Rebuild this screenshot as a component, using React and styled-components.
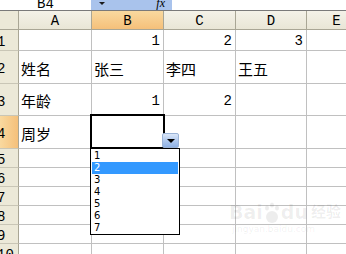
import React from 'react';
import styled, { createGlobalStyle } from 'styled-components';

const GlobalStyle = createGlobalStyle`
  html, body {
    margin: 0;
    padding: 0;
    background: #ffffff;
    overflow: hidden;
  }
`;

const Sheet = styled.div`
  position: relative;
  width: 346px;
  height: 254px;
  overflow: hidden;
  background: #ffffff;
  font-family: "Liberation Mono", "Noto Sans CJK SC", monospace;
  color: #000;
`;

const TopBar = styled.div`
  display: flex;
  height: 10px;
  border-bottom: 1px solid #7a7a7a;
`;

const NameBox = styled.div`
  width: 91px;
  display: flex;
  justify-content: center;
  align-items: flex-end;
  overflow: hidden;
  font-size: 14px;
  line-height: 14px;
  span {
    margin-bottom: -1px;
  }
`;

const FormulaButtons = styled.div`
  width: 81px;
  background: #a9c3ec;
  display: flex;
  align-items: center;
  justify-content: space-between;
  padding: 0 7px 0 8px;
  box-sizing: border-box;
  overflow: hidden;
`;

const TinyArrow = styled.span`
  width: 0;
  height: 0;
  border-left: 3px solid transparent;
  border-right: 3px solid transparent;
  border-top: 3px solid #1a1a1a;
  margin-top: -3px;
`;

const Fx = styled.span`
  font-family: "Liberation Serif", serif;
  font-style: italic;
  font-size: 12px;
  line-height: 10px;
  margin-top: -4px;
`;

const Grid = styled.div`
  display: grid;
  grid-template-columns: 19px 73px 72px 72px 71px 60px;
  grid-template-rows: 19px 21px 33px 32px 33px repeat(6, 19px);
`;

const Cell = styled.div`
  box-sizing: border-box;
  border-right: 1px solid #c0c0c0;
  border-bottom: 1px solid #c0c0c0;
  display: flex;
  align-items: center;
  justify-content: ${p => (p.$num ? 'flex-end' : 'flex-start')};
  padding: ${p => (p.$num ? '2px 3px 0 0' : '2px 0 0 2px')};
  font-size: ${p => (p.$num ? '14px' : '15px')};
  font-family: ${p => (p.$num
    ? '"Liberation Mono", monospace'
    : '"Noto Sans CJK SC", sans-serif')};
  white-space: nowrap;
  overflow: hidden;
`;

const ColHead = styled.div`
  box-sizing: border-box;
  border-right: 1px solid #a9a695;
  border-bottom: 1px solid #a9a695;
  background: ${p => (p.$active
    ? 'linear-gradient(#f9d99f, #f5c07a)'
    : 'linear-gradient(#f4f2e8, #e9e6d6)')};
  display: flex;
  align-items: center;
  justify-content: center;
  font-family: "Liberation Mono", monospace;
  font-size: 14px;
  padding-top: 1px;
`;

const RowHead = styled.div`
  box-sizing: border-box;
  border-right: 1px solid #a9a695;
  border-bottom: 1px solid #c9c6b6;
  background: ${p => (p.$active
    ? 'linear-gradient(90deg, #f9d99f, #f5c07a)'
    : '#ece9d8')};
  display: flex;
  align-items: center;
  font-family: "Liberation Mono", monospace;
  font-size: 14px;
  padding-top: 4px;
  overflow: hidden;
  span {
    margin-left: -3px;
  }
`;

const Corner = styled(ColHead)`
  background: #ece9d8;
`;

const SelectedCell = styled.div`
  position: absolute;
  left: 90px;
  top: 114px;
  width: 75px;
  height: 35px;
  box-sizing: border-box;
  border: 2px solid #000;
`;

const DropButton = styled.div`
  position: absolute;
  left: 162px;
  top: 133px;
  width: 17px;
  height: 15px;
  box-sizing: border-box;
  border: 1px solid #9bb3d6;
  border-radius: 2px;
  background: linear-gradient(#dbe7f8, #a9c4ec 60%, #8fb1e4);
  display: flex;
  align-items: center;
  justify-content: center;
  &::after {
    content: '';
    width: 0;
    height: 0;
    border-left: 4px solid transparent;
    border-right: 4px solid transparent;
    border-top: 4px solid #000;
    margin-top: 1px;
  }
`;

const ListBox = styled.div`
  position: absolute;
  left: 90px;
  top: 148px;
  width: 90px;
  box-sizing: border-box;
  border: 1px solid #000;
  background: #fff;
  padding: 1px 1px 0;
`;

const ListItem = styled.div`
  height: 12px;
  line-height: 12px;
  font-family: "DejaVu Sans", sans-serif;
  font-size: 10px;
  padding-left: 2px;
  background: ${p => (p.$selected ? '#3399ff' : 'transparent')};
  color: ${p => (p.$selected ? '#ffffff' : '#000000')};
`;

const Watermark = styled.div`
  position: absolute;
  left: 229px;
  top: 200px;
  color: rgba(0, 0, 0, 0.07);
  font-family: "DejaVu Sans", "Noto Sans CJK SC", sans-serif;
  pointer-events: none;
`;

const MarkTitle = styled.div`
  display: flex;
  align-items: flex-end;
  font-size: 19px;
  font-weight: bold;
  line-height: 24px;
  gap: 1px;
`;

const MarkUrl = styled.div`
  font-size: 9px;
  line-height: 11px;
  padding-left: 3px;
`;

const columns = ['A', 'B', 'C', 'D', 'E'];

const rows = [
  ['', '1', '2', '3', ''],
  ['姓名', '张三', '李四', '王五', ''],
  ['年龄', '1', '2', '', ''],
  ['周岁', '', '', '', ''],
  ['', '', '', '', ''],
  ['', '', '', '', ''],
  ['', '', '', '', ''],
  ['', '', '', '', ''],
  ['', '', '', '', ''],
  ['', '', '', '', ''],
];

const options = ['1', '2', '3', '4', '5', '6', '7'];

const isNum = v => /^\d+$/.test(v);

export default function App() {
  return (
    <>
      <GlobalStyle />
      <Sheet>
        <TopBar>
          <NameBox><span>B4</span></NameBox>
          <FormulaButtons>
            <TinyArrow />
            <Fx>fx</Fx>
          </FormulaButtons>
        </TopBar>
        <Grid>
          <Corner />
          {columns.map(c => (
            <ColHead key={c} $active={c === 'B'}>{c}</ColHead>
          ))}
          {rows.map((row, r) => (
            <React.Fragment key={r}>
              <RowHead $active={r === 3}><span>{r + 1}</span></RowHead>
              {row.map((v, c) => (
                <Cell key={c} $num={isNum(v)}>{v}</Cell>
              ))}
            </React.Fragment>
          ))}
        </Grid>

        <SelectedCell />
        <DropButton />
        <ListBox>
          {options.map(o => (
            <ListItem key={o} $selected={o === '2'}>{o}</ListItem>
          ))}
        </ListBox>

        <Watermark>
          <MarkTitle>
            <span>Bai</span>
            <svg width="16" height="22" viewBox="0 0 16 22">
              <g fill="currentColor">
                <ellipse cx="3" cy="6" rx="2" ry="2.5" />
                <ellipse cx="8" cy="3" rx="2" ry="2.5" />
                <ellipse cx="13" cy="6" rx="2" ry="2.5" />
                <ellipse cx="8" cy="15" rx="6" ry="6" />
              </g>
            </svg>
            <span>du</span>
            <span style={{ fontSize: 15, marginLeft: 2 }}>经验</span>
          </MarkTitle>
          <MarkUrl>jingyan.baidu.com</MarkUrl>
        </Watermark>
      </Sheet>
    </>
  );
}
